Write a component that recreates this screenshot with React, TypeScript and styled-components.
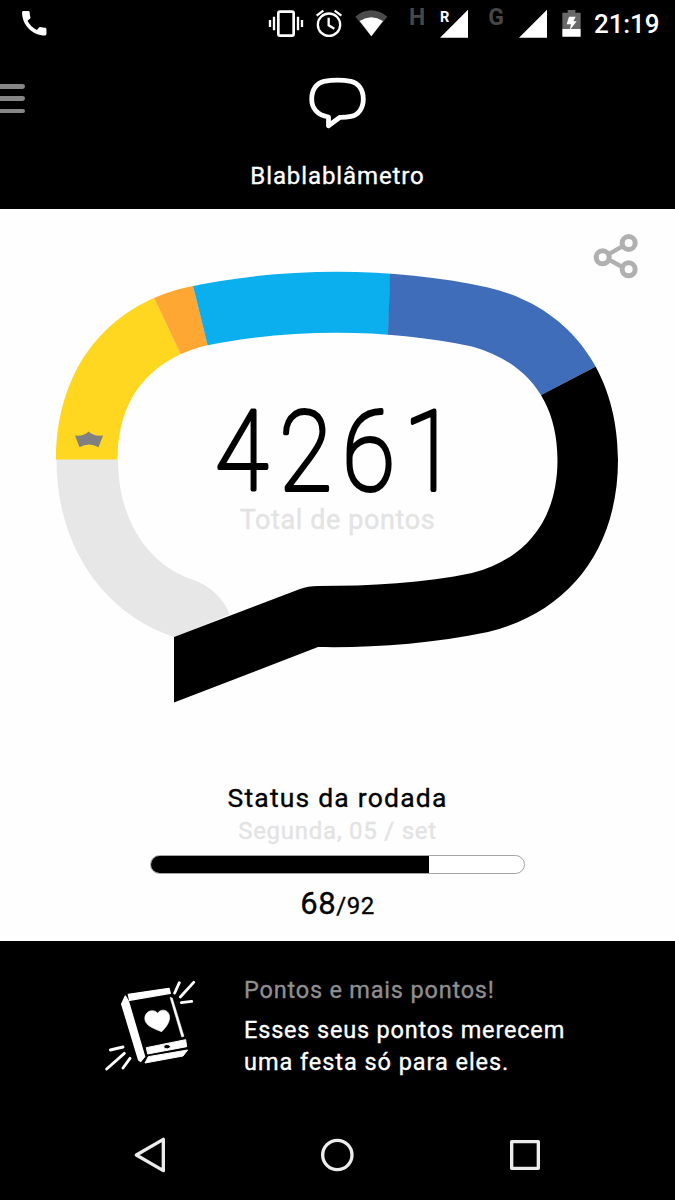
import React from "react";
import styled, { createGlobalStyle } from "styled-components";
import { MdCall } from "react-icons/md";

const GlobalStyle = createGlobalStyle`
  * { box-sizing: border-box; }
  body {
    margin: 0;
    background: #000;
    font-family: Roboto, "Liberation Sans", sans-serif;
  }
  svg { display: block; }
`;

const Screen = styled.div`
  width: 675px;
  height: 1200px;
  display: flex;
  flex-direction: column;
  background: #000;
  overflow: hidden;
`;

const StatusBar = styled.div`
  height: 50px;
  display: flex;
  align-items: flex-start;
  color: #fff;
`;

const CallSlot = styled.div`
  width: 268px;
  padding: 7px 0 0 17.5px;
`;

const StatusIcon = styled.svg<{ $w: number }>`
  width: ${(p) => p.$w}px;
  height: 50px;
  flex: none;
  overflow: visible;
`;

const NetworkLabel = styled.span<{ $w: number }>`
  width: ${(p) => p.$w}px;
  flex: none;
  padding-top: 5px;
  text-align: center;
  font-size: 23px;
  line-height: 26px;
  font-weight: 700;
  color: #474747;
`;

const RoamingLabel = styled.span`
  width: 0;
  padding-top: 9px;
  font-size: 14.5px;
  line-height: 17px;
  font-weight: 700;
`;

const Clock = styled.span`
  padding: 9px 0 0 10px;
  font-size: 26px;
  line-height: 31px;
  font-weight: 500;
  letter-spacing: -0.1px;
`;

const Header = styled.header`
  height: 159px;
  display: grid;
  grid-template-columns: 100px 1fr 100px;
  grid-template-rows: 110px 32px;
`;

const MenuButton = styled.button`
  width: 25px;
  height: 30px;
  margin: 34px 0 0;
  padding: 0;
  border: 0;
  background: none;
  display: flex;
  flex-direction: column;
  gap: 7.5px;
`;

const MenuLine = styled.span`
  width: 24.5px;
  height: 4.8px;
  border-radius: 0 2.4px 2.4px 0;
  background: #868686;
`;

const Brand = styled.div`
  display: flex;
  justify-content: center;
  padding-top: 26px;
`;

const Title = styled.h1`
  grid-column: 1 / -1;
  margin: 0;
  text-align: center;
  font-size: 24px;
  line-height: 32px;
  font-weight: 400;
  letter-spacing: 0.9px;
  -webkit-text-stroke: 0.35px;
  color: #fff;
`;

const Main = styled.main`
  height: 732px;
  background: #fefefe;
  display: flex;
  flex-direction: column;
  align-items: center;
`;

const ShareRow = styled.div`
  align-self: stretch;
  height: 51px;
  padding: 23px 36px 0 0;
  display: flex;
  justify-content: flex-end;
`;

const Gauge = styled.section`
  width: 675px;
  height: 450px;
  display: grid;
  > * { grid-area: 1 / 1; }
`;

const Points = styled.text`
  font-size: 112px;
  font-weight: 100;
  fill: #000;
  stroke: #000;
  stroke-width: 4px;
  stroke-linejoin: round;
  text-anchor: middle;
`;

const PointsLabel = styled.div`
  align-self: start;
  justify-self: center;
  margin-top: 244px;
  font-size: 27px;
  line-height: 32px;
  letter-spacing: 0.6px;
  -webkit-text-stroke: 0.35px;
  color: #e3e3e3;
`;

const Round = styled.section`
  padding-top: 72px;
  display: flex;
  flex-direction: column;
  align-items: center;
`;

const RoundTitle = styled.h2`
  margin: 0;
  font-size: 26.5px;
  line-height: 32px;
  font-weight: 400;
  letter-spacing: 1.2px;
  -webkit-text-stroke: 0.35px;
  color: #000;
`;

const RoundDate = styled.div`
  margin-top: 1px;
  font-size: 24px;
  line-height: 32px;
  letter-spacing: 0.75px;
  -webkit-text-stroke: 0.35px;
  color: #e3e3e3;
`;

const Track = styled.div`
  width: 375px;
  height: 19px;
  margin-top: 8px;
  border: 1px solid #a5a5a5;
  border-radius: 10px;
  overflow: hidden;
  background: #fff;
`;

const Fill = styled.div`
  height: 100%;
  background: #000;
`;

const Tally = styled.div`
  margin-top: 10px;
  font-size: 24px;
  line-height: 40px;
  letter-spacing: 0.6px;
  -webkit-text-stroke: 0.35px;
  color: #000;
`;

const TallyValue = styled.span`
  font-size: 31px;
`;

const Promo = styled.section`
  height: 169px;
  display: flex;
  padding: 33px 0 0 103px;
`;

const PromoArt = styled.svg`
  width: 95px;
  height: 95px;
  margin-top: 4px;
  flex: none;
`;

const PromoText = styled.div`
  margin-left: 46px;
  font-size: 23.5px;
  line-height: 32px;
  -webkit-text-stroke: 0.35px;
  color: #fff;
`;

const PromoTitle = styled.div`
  margin-bottom: 8px;
  letter-spacing: 0.8px;
  color: #8f8f8f;
`;

const PromoLine = styled.div<{ $spacing: number }>`
  letter-spacing: ${(p) => p.$spacing}px;
  white-space: nowrap;
`;

const NavBar = styled.nav`
  height: 90px;
  display: flex;
  justify-content: space-between;
  padding: 26px 133px 0 132px;
`;

const SEGMENTS = [
  { color: "#ffd720", points: "40,460 140,460 180,353 154.5,299 140,240 40,240" },
  { color: "#ffa633", points: "154.5,299 140,268 185,250 193,286 207.5,344.5 212,362 185,363.5" },
  { color: "#0cafee", points: "193,286 184,250 391,250 388,345 210,355" },
  { color: "#3f6db9", points: "390.8,250 640,250 640,343.5 520,406 387.4,350" },
  { color: "#000", points: "640,343.5 520,406 520,460 640,460" },
];

// The digits are condensed horizontally, so their centres are scaled back up.
const DIGIT_CONDENSE = 0.86;
const DIGIT_CENTERS = [241.5, 305.5, 368.5, 430];

function ScoreRing({ points }: { points: number }) {
  return (
    <svg width="675" height="450" viewBox="0 260 675 450">
      <clipPath id="ring">
        <path
          clipRule="evenodd"
          d="M56 460C56 369 107 306 186 287.5C282 266.5 392 266.5 488 287.5C567 306 618 369 618 460L557.5 460C557.5 398 524 361 472 346.5C386 328 288 328 202 346.5C150 361 117.5 398 117.5 460Z"
        />
      </clipPath>
      <g clipPath="url(#ring)">
        {SEGMENTS.map((s) => (
          <polygon key={s.color} points={s.points} fill={s.color} />
        ))}
      </g>
      <path
        fill="#e7e7e7"
        d="M56.5 459.5C56.5 545 102 613 174 637L230 614.5C224 600 212 586 191 579C150 565 118 522 118 459.5Z"
      />
      <path d="M618 459.5C618 551 567 613 488 632C430 644 370 648 318 647L174 702.5V637L300 589Q308 586 318 586C370 586 425 583 472 573C524 560 557.5 522 557.5 459.5Z" />
      <path
        fill="#808080"
        d="M75 435.5Q84 436.5 88.7 431.5Q93 436.5 103 435.5L98.5 447.3Q89 441.5 79.5 447.3Z"
      />
      <Points
        transform={`scale(${DIGIT_CONDENSE} 1)`}
        x={DIGIT_CENTERS.map((c) => c / DIGIT_CONDENSE).join(" ")}
        y="490.5"
      >
        {points}
      </Points>
    </svg>
  );
}

function BubbleLogo() {
  return (
    <svg width="60" height="54" viewBox="308 76 60 54" fill="none" stroke="#fff" strokeWidth="4.8" strokeLinejoin="round">
      <path d="M328.5 117C317 115 311.7 108 311.7 99C311.7 90 316.5 83 324 81.3Q337.5 79 351 81.3C358.5 83 363.3 90 363.3 99C363.3 108 358.5 115 351 116.3Q345 117.5 340 117.3L328.5 125.8Z" />
    </svg>
  );
}

function ShareIcon() {
  return (
    <svg width="48" height="48" viewBox="0 0 144 144" fill="none" stroke="#b0b0b0" strokeWidth="15">
      <path d="M52 67L94 43M52 82L94 105" strokeWidth="13" />
      <circle cx="35" cy="76" r="19.5" />
      <circle cx="113" cy="33" r="19.5" />
      <circle cx="113" cy="112" r="19.5" />
    </svg>
  );
}

function PhoneParty() {
  return (
    <PromoArt viewBox="40 55 285 285" fill="#fff">
      <path d="M116 104L238 86L242 101L120 122Z" stroke="#fff" strokeWidth="4" strokeLinejoin="round" />
      <path d="M96 133L107 109L116 124L165 291L153 305L147 301Z" stroke="#fff" strokeWidth="4" strokeLinejoin="round" />
      <path fillRule="evenodd" d="M170 264L288 240L291 261L174 283ZM222 262A10 6.5 0 1 0 242 260A10 6.5 0 1 0 222 262Z" stroke="#fff" strokeWidth="3" />
      <path d="M176 291L294 271L280 289L166 310Z" stroke="#fff" strokeWidth="3" strokeLinejoin="round" />
      <path d="M241 113L248 115L283 230L276 232Z" stroke="#fff" strokeWidth="1.5" />
      <path d="M204 161C196 148 170 151 166 171C162 193 182 203 216 216C230 202 243 184 239 167C235 149 212 146 204 161Z" stroke="#fff" strokeWidth="2" strokeLinejoin="round" />
      <path d="M255 100L269 69M272 112L312 68M275 129L306 125M62 271L100 262M51 328L104 281M100 325L121 296" fill="none" stroke="#fff" strokeWidth="8.5" strokeLinecap="round" />
    </PromoArt>
  );
}

export default function App() {
  const done = 68;
  const total = 92;
  return (
    <>
      <GlobalStyle />
      <Screen>
        <StatusBar>
          <CallSlot>
            <MdCall size={32.5} />
          </CallSlot>
          <StatusIcon $w={36} viewBox="24 0 108 150" fill="none" stroke="#fff">
            <rect x="55" y="35" width="46" height="72" rx="5" strokeWidth="8" />
            <path strokeWidth="7" d="M42 50V91M30 60V81M114 50V91M126 60V81" />
          </StatusIcon>
          <StatusIcon $w={48} viewBox="132 0 144 150" fill="none" stroke="#fff">
            <circle cx="207" cy="74" r="33.5" strokeWidth="7" />
            <path strokeWidth="7" d="M170 47L190 32M244 47L224 32M206 53V76L223 86" />
          </StatusIcon>
          <StatusIcon $w={44} viewBox="276 0 132 150">
            <path fill="#4b4b4b" d="M286 50Q333 12 382 50L334 109Z" />
            <path fill="#fff" d="M299 63Q334 41 369 63L334 109Z" />
          </StatusIcon>
          <NetworkLabel $w={42}>H</NetworkLabel>
          <StatusIcon $w={2} viewBox="0 0 6 150" />
          <RoamingLabel>R</RoamingLabel>
          <StatusIcon $w={30} viewBox="540 0 90 150">
            <path fill="#fff" d="M540 113L624 29V113Z" />
          </StatusIcon>
          <NetworkLabel $w={52}>G</NetworkLabel>
          <StatusIcon $w={32} viewBox="786 0 96 150">
            <path fill="#fff" d="M777 113L861 29V113Z" />
          </StatusIcon>
          <StatusIcon $w={30} viewBox="882 0 90 150">
            <path fill="#686868" d="M907 38H923V30H946V38H962V88H907Z" />
            <path fill="#fff" d="M907 87H962V110H907ZM927 50H947L940 64H950L929 91L933 73H920Z" />
          </StatusIcon>
          <Clock>21:19</Clock>
        </StatusBar>

        <Header>
          <MenuButton aria-label="Menu">
            <MenuLine />
            <MenuLine />
            <MenuLine />
          </MenuButton>
          <Brand>
            <BubbleLogo />
          </Brand>
          <Title>Blablablâmetro</Title>
        </Header>

        <Main>
          <ShareRow>
            <ShareIcon />
          </ShareRow>
          <Gauge>
            <ScoreRing points={4261} />
            <PointsLabel>Total de pontos</PointsLabel>
          </Gauge>
          <Round>
            <RoundTitle>Status da rodada</RoundTitle>
            <RoundDate>Segunda, 05 / set</RoundDate>
            <Track>
              <Fill style={{ width: `${(done / total) * 101}%` }} />
            </Track>
            <Tally>
              <TallyValue>{done}</TallyValue>/{total}
            </Tally>
          </Round>
        </Main>

        <Promo>
          <PhoneParty />
          <PromoText>
            <PromoTitle>Pontos e mais pontos!</PromoTitle>
            <PromoLine $spacing={0.82}>Esses seus pontos merecem</PromoLine>
            <PromoLine $spacing={0.95}>uma festa só para eles.</PromoLine>
          </PromoText>
        </Promo>

        <NavBar>
          <svg width="36" height="38" viewBox="36 78 108 114" fill="none" stroke="#ececec" strokeWidth="10" strokeLinejoin="round">
            <path d="M49 135L130 88V182Z" />
          </svg>
          <svg width="36" height="38" viewBox="598 78 108 114" fill="none" stroke="#ececec" strokeWidth="10">
            <circle cx="653" cy="135" r="44" />
          </svg>
          <svg width="36" height="38" viewBox="1158 78 108 114" fill="none" stroke="#ececec" strokeWidth="10" strokeLinejoin="round">
            <rect x="1175" y="95" width="80" height="80" />
          </svg>
        </NavBar>
      </Screen>
    </>
  );
}
